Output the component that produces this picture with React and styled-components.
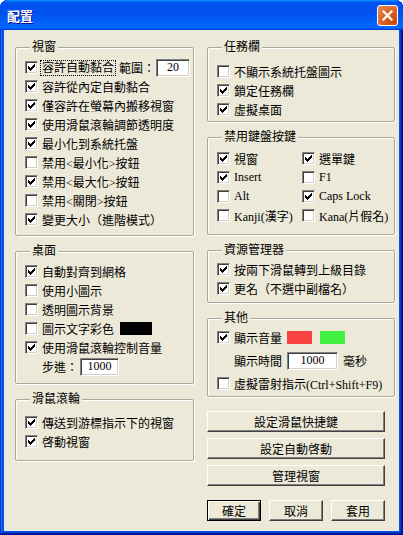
import styled, { createGlobalStyle, css } from "styled-components";

const GlobalStyle = createGlobalStyle`
  html, body {
    margin: 0;
    padding: 0;
    background: #fff;
  }
  body {
    font-family: "Liberation Serif", "Noto Sans CJK TC", serif;
    font-size: 12px;
    color: #000;
  }
`;

const Window = styled.div`
  width: 403px;
  height: 535px;
  box-sizing: border-box;
  display: flex;
  flex-direction: column;
  background: #0055ea;
  border-radius: 8px 8px 0 0;
  overflow: hidden;
  box-shadow: inset -1px -1px #00138c, inset 1px 1px #0831d9,
    inset -2px -2px #001ea0, inset 2px 2px #166aee, inset -3px -3px #003bda,
    inset 3px 3px #0855dd;
`;

const TitleBar = styled.div`
  flex: none;
  height: 30px;
  box-sizing: border-box;
  display: flex;
  align-items: center;
  justify-content: space-between;
  padding: 0 5px 0 7px;
  border-radius: 8px 8px 0 0;
  background: linear-gradient(
    180deg,
    #0997ff,
    #0053ee 8%,
    #0050ee 40%,
    #0066ff 88%,
    #0066ff 93%,
    #005bff 95%,
    #003dd7 96%,
    #003dd7
  );
`;

const Title = styled.span`
  font-family: "Noto Sans CJK TC", sans-serif;
  font-weight: bold;
  font-size: 13px;
  color: #fff;
  text-shadow: 1px 1px #0f1089;
`;

const CloseButton = styled.span`
  width: 21px;
  height: 21px;
  box-sizing: border-box;
  display: flex;
  align-items: center;
  justify-content: center;
  border: 1px solid #fff;
  border-radius: 3px;
  background: radial-gradient(circle at 90% 90%, #cc4600 0%, #dc6527 55%, #e38a66 100%);
`;

const Body = styled.div`
  flex: 1;
  margin: 0 4px 4px;
  padding: 10px 4px 0 11px;
  background: #ece9d8;
  display: grid;
  grid-template-columns: 179px 188px;
  column-gap: 13px;
  align-items: start;
`;

const Column = styled.div`
  display: flex;
  flex-direction: column;
  gap: 8px;
`;

const Group = styled.fieldset`
  margin: 0;
  min-width: 0;
  padding: ${(p) => p.$pt}px 9px ${(p) => p.$pb}px;
  border: 1px solid #aca899;
  border-radius: 2px;
  box-shadow: 1px 1px 0 #fff, inset 1px 1px 0 #fff;
`;

const Legend = styled.legend`
  margin-left: 5px;
  padding: 0 2px;
  line-height: 14px;
  background: #ece9d8;
`;

const Row = styled.div`
  display: flex;
  align-items: center;
  gap: 4px;
  height: ${(p) => p.$h || 19}px;
  padding-left: ${(p) => p.$indent || 0}px;
  white-space: nowrap;
`;

const KeyGrid = styled.div`
  display: grid;
  grid-template-columns: 85px 1fr;
`;

const Box = styled.span`
  flex: none;
  width: 13px;
  height: 13px;
  box-sizing: border-box;
  display: flex;
  align-items: center;
  justify-content: center;
  background: #fff;
  border: 1px solid;
  border-color: #808080 #fff #fff #808080;
  box-shadow: inset 1px 1px #404040, inset -1px -1px #d4d0c8;
`;

const TextBox = styled.span`
  flex: none;
  width: ${(p) => p.$w}px;
  height: 18px;
  box-sizing: border-box;
  display: flex;
  align-items: center;
  justify-content: center;
  margin-left: ${(p) => p.$ml || 0}px;
  background: #fff;
  border: 1px solid;
  border-color: #808080 #fff #fff #808080;
  box-shadow: inset 1px 1px #404040, inset -1px -1px #d4d0c8;
`;

const Focus = styled.span`
  margin-left: -1px;
  padding: 0 1px;
  line-height: 14px;
  outline: 1px dotted #000;
`;

const Swatch = styled.span`
  flex: none;
  width: 25px;
  height: 13px;
  margin-left: ${(p) => p.$ml || 0}px;
  background: ${(p) => p.$color};
`;

const ButtonStack = styled.div`
  width: 178px;
  margin-top: 6px;
  display: flex;
  flex-direction: column;
  gap: 6px;
`;

const ActionRow = styled.div`
  margin-top: 8px;
  display: grid;
  grid-template-columns: repeat(3, 54px);
  gap: 8px;
`;

const Button = styled.button`
  box-sizing: border-box;
  width: 100%;
  height: 21px;
  padding: 0;
  font: 12px "Noto Sans CJK TC", sans-serif;
  color: #000;
  background: #ece9d8;
  border: 1px solid;
  border-color: #fff #404040 #404040 #fff;
  box-shadow: inset -1px -1px #808080;
  ${(p) =>
    p.$default &&
    css`
      border-color: #000;
      box-shadow: inset 1px 1px #fff, inset -1px -1px #404040,
        inset -2px -2px #808080;
    `}
`;

function Check({ on }) {
  return (
    <Box>
      {on && (
        <svg width="7" height="7" viewBox="0 0 7 7" shapeRendering="crispEdges">
          <path
            d="M6 0h1v1h-1z M5 1h2v1h-2z M0 2h1v1h-1z M4 2h3v1h-3z M0 3h2v1h-2z M3 3h3v1h-3z M0 4h5v1h-5z M1 5h3v1h-3z M2 6h1v1h-1z"
            fill="#000"
          />
        </svg>
      )}
    </Box>
  );
}

function Option({ on, children }) {
  return (
    <Row>
      <Check on={on} />
      <span>{children}</span>
    </Row>
  );
}

const windowOptions = [
  ["容許從內定自動黏合", true],
  ["僅容許在螢幕內搬移視窗", true],
  ["使用滑鼠滾輪調節透明度", true],
  ["最小化到系統托盤", true],
  ["禁用<最小化>按鈕", false],
  ["禁用<最大化>按鈕", true],
  ["禁用<關閉>按鈕", false],
  ["變更大小（進階模式）", true],
];

const keys = [
  ["視窗", true],
  ["選單鍵", true],
  ["Insert", true],
  ["F1", false],
  ["Alt", false],
  ["Caps Lock", true],
  ["Kanji(漢字)", false],
  ["Kana(片假名)", false],
];

export default function App() {
  return (
    <>
      <GlobalStyle />
      <Window>
        <TitleBar>
          <Title>配置</Title>
          <CloseButton>
            <svg width="11" height="11" viewBox="0 0 11 11">
              <path d="M1.5 1.5l8 8M9.5 1.5l-8 8" stroke="#fff" strokeWidth="2.2" strokeLinecap="square" />
            </svg>
          </CloseButton>
        </TitleBar>
        <Body>
          <Column>
            <Group $pt={4} $pb={6}>
              <Legend>視窗</Legend>
              <Row>
                <Check on />
                <Focus>容許自動黏合</Focus>
                <span>範圍：</span>
                <TextBox $w={34} $ml={-3}>20</TextBox>
              </Row>
              {windowOptions.map(([label, on]) => (
                <Option key={label} on={on}>
                  {label}
                </Option>
              ))}
            </Group>
            <Group $pt={4} $pb={7}>
              <Legend>桌面</Legend>
              <Option on>自動對齊到網格</Option>
              <Option>使用小圖示</Option>
              <Option>透明圖示背景</Option>
              <Row>
                <Check />
                <span>圖示文字彩色</span>
                <Swatch $color="#000" $ml={2} style={{ width: 32 }} />
              </Row>
              <Option on>使用滑鼠滾輪控制音量</Option>
              <Row $indent={17}>
                <span>步進：</span>
                <TextBox $w={39} $ml={-2}>1000</TextBox>
              </Row>
            </Group>
            <Group $pt={7} $pb={9}>
              <Legend>滑鼠滾輪</Legend>
              <Option on>傳送到游標指示下的視窗</Option>
              <Option on>啓動視窗</Option>
            </Group>
          </Column>
          <Column>
            <Group $pt={8} $pb={2}>
              <Legend>任務欄</Legend>
              <Option>不顯示系統托盤圖示</Option>
              <Option on>鎖定任務欄</Option>
              <Option on>虛擬桌面</Option>
            </Group>
            <Group $pt={5} $pb={9}>
              <Legend>禁用鍵盤按鍵</Legend>
              <KeyGrid>
                {keys.map(([label, on]) => (
                  <Option key={label} on={on}>
                    {label}
                  </Option>
                ))}
              </KeyGrid>
            </Group>
            <Group $pt={3} $pb={4}>
              <Legend>資源管理器</Legend>
              <Option on>按兩下滑鼠轉到上級目錄</Option>
              <Option on>更名（不選中副檔名）</Option>
            </Group>
            <Group $pt={3} $pb={3}>
              <Legend>其他</Legend>
              <Row>
                <Check on />
                <span>顯示音量</span>
                <Swatch $color="#f94242" $ml={1} />
                <Swatch $color="#42f242" $ml={4} />
              </Row>
              <Row $h={27} $indent={17}>
                <span>顯示時間</span>
                <TextBox $w={51} $ml={1}>1000</TextBox>
                <span style={{ marginLeft: 1 }}>毫秒</span>
              </Row>
              <Option>虛擬雷射指示(Ctrl+Shift+F9)</Option>
            </Group>
            <ButtonStack>
              <Button>設定滑鼠快捷鍵</Button>
              <Button>設定自動啓動</Button>
              <Button>管理視窗</Button>
              <ActionRow>
                <Button $default>確定</Button>
                <Button>取消</Button>
                <Button>套用</Button>
              </ActionRow>
            </ButtonStack>
          </Column>
        </Body>
      </Window>
    </>
  );
}
